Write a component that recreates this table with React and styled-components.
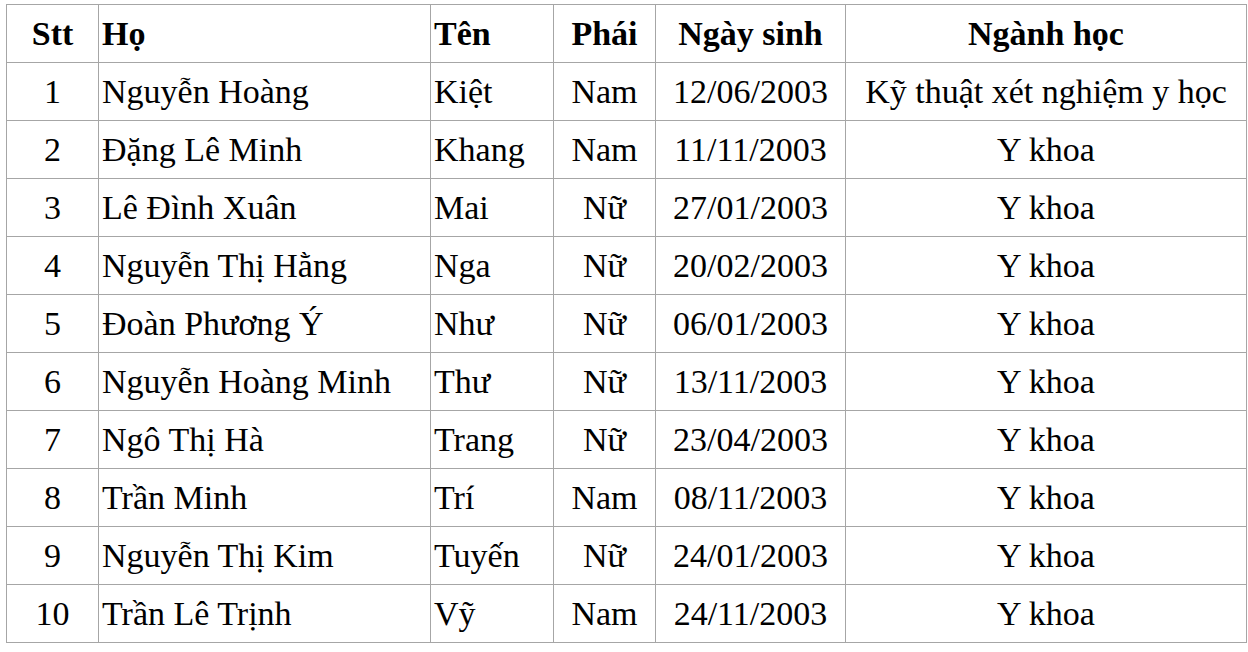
import React from "react";
import styled, { createGlobalStyle } from "styled-components";

const Global = createGlobalStyle`
  html, body { margin: 0; padding: 0; background: #ffffff; }
  body { font-family: "Liberation Serif", "Times New Roman", serif; color: #000; }
`;

const Page = styled.div`
  padding: 4px 0 0 6px;
`;

const Table = styled.table`
  border-collapse: collapse;
  table-layout: fixed;
  width: 1240px;
  font-family: "Liberation Serif", "Times New Roman", serif;
  font-size: 34px;
  color: #000;
`;

const HeadCell = styled.th`
  border: 1px solid #a6a6a6;
  height: 57px;
  padding: 0 3px;
  font-weight: bold;
  text-align: ${(p) => p.$align || "center"};
  vertical-align: middle;
  white-space: nowrap;
`;

const Cell = styled.td`
  border: 1px solid #a6a6a6;
  height: 57px;
  padding: 0 3px;
  text-align: ${(p) => p.$align || "center"};
  vertical-align: middle;
  white-space: nowrap;
`;

const columns = [
  { key: "stt", label: "Stt", width: 92, align: "center" },
  { key: "ho", label: "Họ", width: 332, align: "left" },
  { key: "ten", label: "Tên", width: 123, align: "left" },
  { key: "phai", label: "Phái", width: 102, align: "center" },
  { key: "ngaysinh", label: "Ngày sinh", width: 190, align: "center" },
  { key: "nganh", label: "Ngành học", width: 401, align: "center" },
];

const rows = [
  ["1", "Nguyễn Hoàng", "Kiệt", "Nam", "12/06/2003", "Kỹ thuật xét nghiệm y học"],
  ["2", "Đặng Lê Minh", "Khang", "Nam", "11/11/2003", "Y khoa"],
  ["3", "Lê Đình Xuân", "Mai", "Nữ", "27/01/2003", "Y khoa"],
  ["4", "Nguyễn Thị Hằng", "Nga", "Nữ", "20/02/2003", "Y khoa"],
  ["5", "Đoàn Phương Ý", "Như", "Nữ", "06/01/2003", "Y khoa"],
  ["6", "Nguyễn Hoàng Minh", "Thư", "Nữ", "13/11/2003", "Y khoa"],
  ["7", "Ngô Thị Hà", "Trang", "Nữ", "23/04/2003", "Y khoa"],
  ["8", "Trần Minh", "Trí", "Nam", "08/11/2003", "Y khoa"],
  ["9", "Nguyễn Thị Kim", "Tuyến", "Nữ", "24/01/2003", "Y khoa"],
  ["10", "Trần Lê Trịnh", "Vỹ", "Nam", "24/11/2003", "Y khoa"],
];

export default function App() {
  return (
    <Page>
      <Global />
      <Table>
        <colgroup>
          {columns.map((c) => (
            <col key={c.key} style={{ width: c.width }} />
          ))}
        </colgroup>
        <thead>
          <tr>
            {columns.map((c) => (
              <HeadCell key={c.key} $align={c.align}>
                {c.label}
              </HeadCell>
            ))}
          </tr>
        </thead>
        <tbody>
          {rows.map((r) => (
            <tr key={r[0]}>
              {r.map((v, i) => (
                <Cell key={i} $align={columns[i].align}>
                  {v}
                </Cell>
              ))}
            </tr>
          ))}
        </tbody>
      </Table>
    </Page>
  );
}
